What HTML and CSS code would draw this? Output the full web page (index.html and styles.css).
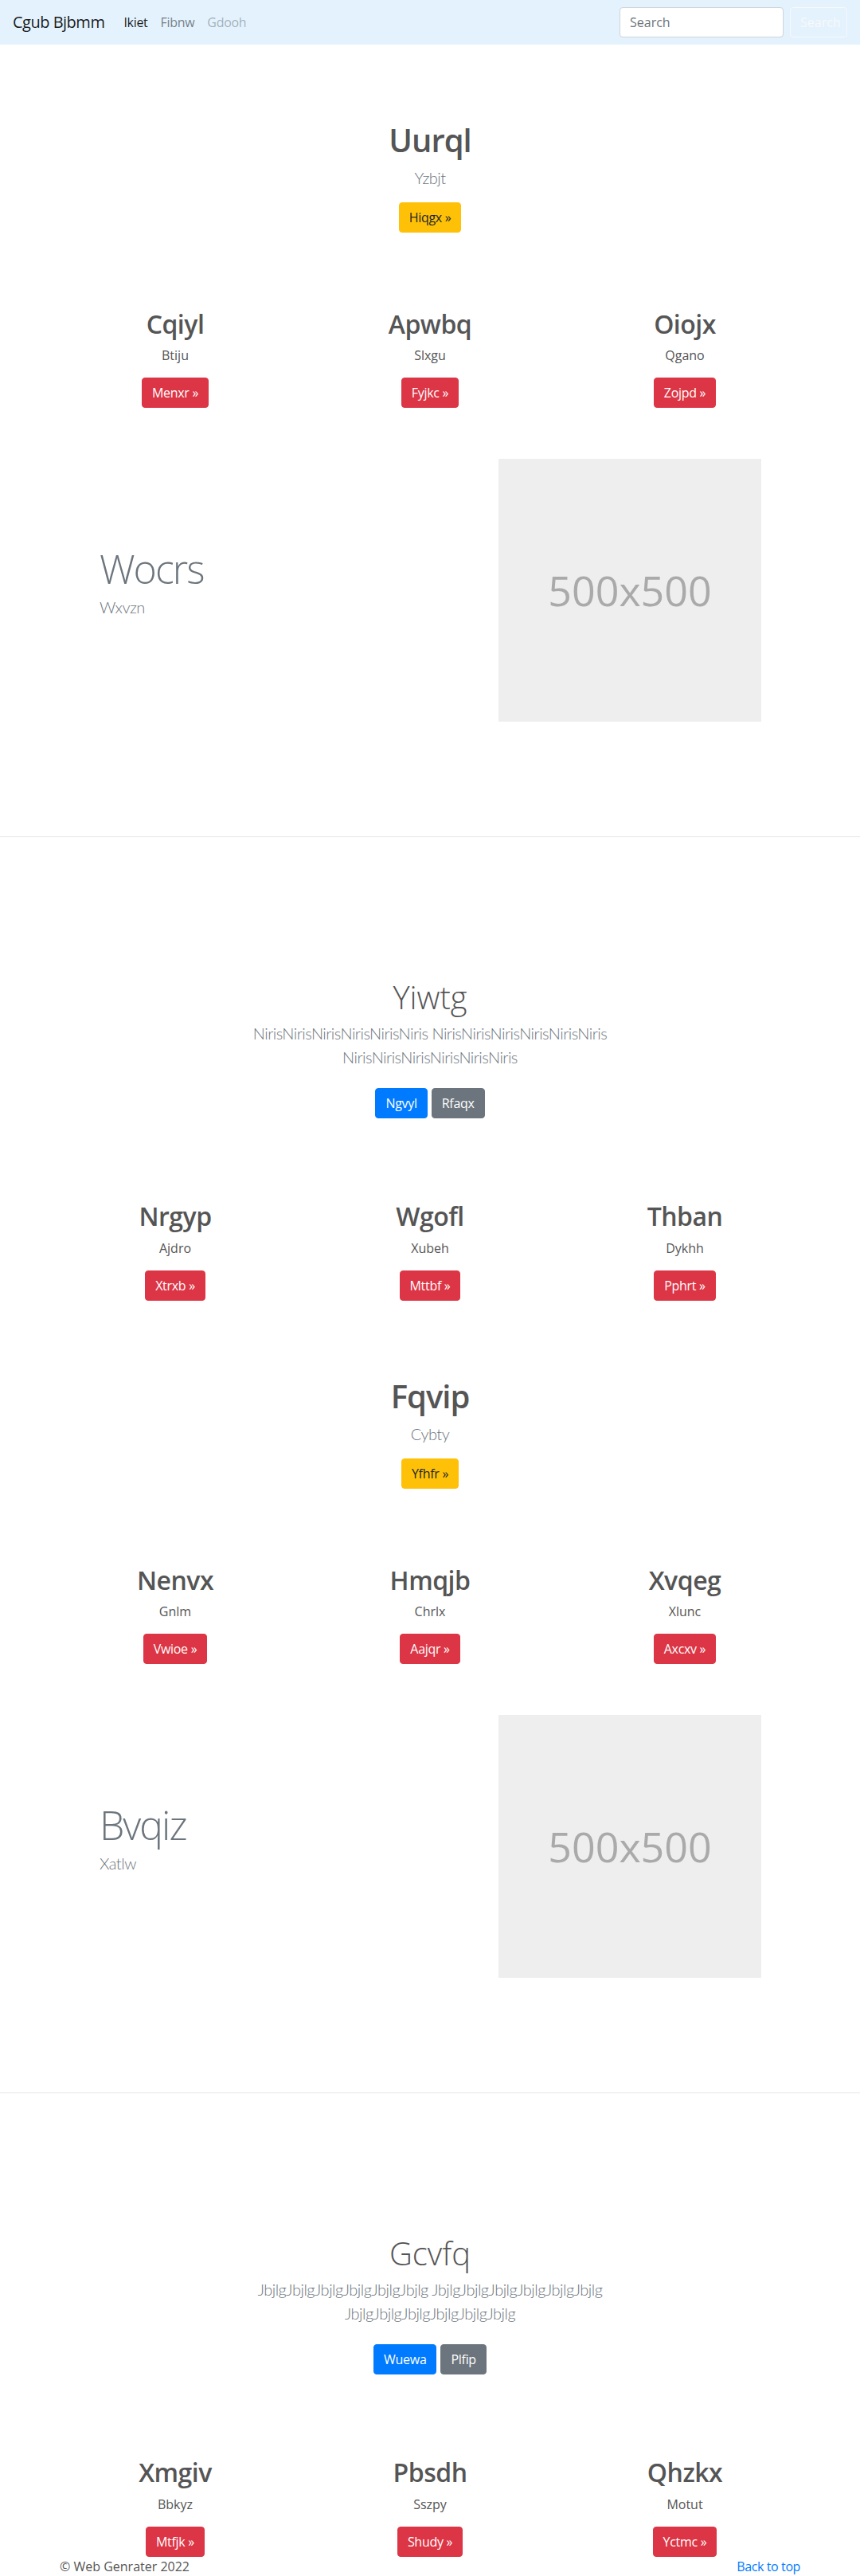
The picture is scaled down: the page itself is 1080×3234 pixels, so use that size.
FILE: index.html
```html
<!DOCTYPE html>
<html lang="en">
<head>
<meta charset="utf-8">
<title>Cgub Bjbmm</title>
<link rel="stylesheet" href="styles.css">
</head>
<body>
<nav class="navbar">
  <a class="brand" href="#">Cgub Bjbmm</a>
  <ul class="nav">
    <li><a class="nav-link active" href="#">Ikiet</a></li>
    <li><a class="nav-link" href="#">Fibnw</a></li>
    <li><a class="nav-link disabled" href="#">Gdooh</a></li>
  </ul>
  <form class="search">
    <input class="search-input" type="text" placeholder="Search">
    <button class="search-btn" type="button">Search</button>
  </form>
</nav>

<main>
  <section class="hero hero-top">
    <h1 class="hero-title">Uurql</h1>
    <p class="lead muted">Yzbjt</p>
    <div class="btn-row"><a class="btn btn-warning" href="#">Hiqgx »</a></div>
  </section>

  <section class="cols">
    <div class="col"><h2 class="col-title">Cqiyl</h2><p class="col-text">Btiju</p><a class="btn btn-danger" href="#">Menxr »</a></div>
    <div class="col"><h2 class="col-title">Apwbq</h2><p class="col-text">Slxgu</p><a class="btn btn-danger" href="#">Fyjkc »</a></div>
    <div class="col"><h2 class="col-title">Oiojx</h2><p class="col-text">Qgano</p><a class="btn btn-danger" href="#">Zojpd »</a></div>
  </section>

  <section class="featurette">
    <div class="feat-text">
      <h2 class="feat-heading">Wocrs</h2>
      <p class="lead muted">Wxvzn</p>
    </div>
    <div class="placeholder">500x500</div>
  </section>

  <hr class="divider">

  <section class="jumbo">
    <h1 class="jumbo-title">Yiwtg</h1>
    <p class="lead muted jumbo-text">NirisNirisNirisNirisNirisNiris NirisNirisNirisNirisNirisNiris NirisNirisNirisNirisNirisNiris</p>
    <div class="btn-row jumbo-btns"><a class="btn btn-primary" href="#">Ngvyl</a><a class="btn btn-secondary" href="#">Rfaqx</a></div>
  </section>

  <section class="cols">
    <div class="col"><h2 class="col-title">Nrgyp</h2><p class="col-text">Ajdro</p><a class="btn btn-danger" href="#">Xtrxb »</a></div>
    <div class="col"><h2 class="col-title">Wgofl</h2><p class="col-text">Xubeh</p><a class="btn btn-danger" href="#">Mttbf »</a></div>
    <div class="col"><h2 class="col-title">Thban</h2><p class="col-text">Dykhh</p><a class="btn btn-danger" href="#">Pphrt »</a></div>
  </section>

  <section class="hero hero-mid">
    <h1 class="hero-title">Fqvip</h1>
    <p class="lead muted">Cybty</p>
    <div class="btn-row"><a class="btn btn-warning" href="#">Yfhfr »</a></div>
  </section>

  <section class="cols">
    <div class="col"><h2 class="col-title">Nenvx</h2><p class="col-text">Gnlm</p><a class="btn btn-danger" href="#">Vwioe »</a></div>
    <div class="col"><h2 class="col-title">Hmqjb</h2><p class="col-text">Chrlx</p><a class="btn btn-danger" href="#">Aajqr »</a></div>
    <div class="col"><h2 class="col-title">Xvqeg</h2><p class="col-text">Xlunc</p><a class="btn btn-danger" href="#">Axcxv »</a></div>
  </section>

  <section class="featurette">
    <div class="feat-text">
      <h2 class="feat-heading">Bvqiz</h2>
      <p class="lead muted">Xatlw</p>
    </div>
    <div class="placeholder">500x500</div>
  </section>

  <hr class="divider">

  <section class="jumbo">
    <h1 class="jumbo-title">Gcvfq</h1>
    <p class="lead muted jumbo-text">JbjlgJbjlgJbjlgJbjlgJbjlgJbjlg JbjlgJbjlgJbjlgJbjlgJbjlgJbjlg JbjlgJbjlgJbjlgJbjlgJbjlgJbjlg</p>
    <div class="btn-row jumbo-btns"><a class="btn btn-primary" href="#">Wuewa</a><a class="btn btn-secondary" href="#">Plfip</a></div>
  </section>

  <section class="cols">
    <div class="col"><h2 class="col-title">Xmgiv</h2><p class="col-text">Bbkyz</p><a class="btn btn-danger" href="#">Mtfjk »</a></div>
    <div class="col"><h2 class="col-title">Pbsdh</h2><p class="col-text">Sszpy</p><a class="btn btn-danger" href="#">Shudy »</a></div>
    <div class="col"><h2 class="col-title">Qhzkx</h2><p class="col-text">Motut</p><a class="btn btn-danger" href="#">Yctmc »</a></div>
  </section>
</main>

<footer class="footer">
  <p class="copy">© Web Genrater 2022</p>
  <a class="top-link" href="#">Back to top</a>
</footer>
</body>
</html>
```

FILE: styles.css
```css
* { box-sizing: border-box; }

html, body { margin: 0; padding: 0; }

body {
  font-family: "Segoe UI", "Open Sans", "Noto Sans", sans-serif;
  font-size: 16px;
  line-height: 1.5;
  color: #555;
  background: #fff;
}

a { text-decoration: none; }

/* ---------- navbar ---------- */
.navbar {
  display: flex;
  align-items: center;
  height: 56px;
  padding: 8px 16px;
  background: #e3f2fd;
}
.brand {
  font-size: 20px;
  line-height: 30px;
  padding: 5px 0;
  margin-right: 16px;
  letter-spacing: -0.5px;
  color: rgba(0, 0, 0, .9);
}
.nav {
  display: flex;
  flex: 1;
  list-style: none;
  margin: 0;
  padding: 0;
}
.nav-link {
  display: block;
  padding: 8px;
  letter-spacing: -0.3px;
  color: rgba(0, 0, 0, .5);
}
.nav-link.active { color: rgba(0, 0, 0, .9); }
.nav-link.disabled { color: rgba(0, 0, 0, .3); }

.search { display: flex; align-items: center; }
.search-input {
  width: 206px;
  height: 38px;
  padding: 6px 12px;
  font: inherit;
  color: #495057;
  background: #fff;
  border: 1px solid #ced4da;
  border-radius: 4px;
  margin-right: 8px;
}
.search-input::placeholder { color: #6c757d; }
.search-btn {
  width: 72px;
  height: 38px;
  padding: 6px 12px;
  font: inherit;
  color: #f8f9fa;
  background: transparent;
  border: 1px solid #f8f9fa;
  border-radius: 4px;
}

/* ---------- common ---------- */
.lead {
  font-family: "Lato", "Open Sans", sans-serif;
  font-size: 20px;
  font-weight: 300;
  line-height: 30px;
  letter-spacing: -0.5px;
  margin: 0 0 16px;
}
.muted { color: #6c757d; }

.btn {
  display: inline-block;
  padding: 6px 12px;
  font-size: 16px;
  line-height: 24px;
  letter-spacing: -0.3px;
  border: 1px solid transparent;
  border-radius: 4px;
  text-align: center;
}
.btn-warning { background: #ffc107; border-color: #ffc107; color: #212529; }
.btn-danger { background: #dc3545; border-color: #dc3545; color: #fff; }
.btn-primary { background: #007bff; border-color: #007bff; color: #fff; }
.btn-secondary { background: #6c757d; border-color: #6c757d; color: #fff; }

.btn-row { display: flex; justify-content: center; }

/* ---------- hero ---------- */
.hero { text-align: center; }
.hero-top { padding-top: 96px; }
.hero-mid { margin-top: 96px; }
.hero-title {
  font-size: 40px;
  font-weight: 600;
  line-height: 48px;
  letter-spacing: -1px;
  margin: 0 0 8px;
}

/* ---------- three columns ---------- */
.cols {
  display: grid;
  grid-template-columns: repeat(3, 1fr);
  width: 960px;
  margin: 96px auto 0;
}
.col {
  display: flex;
  flex-direction: column;
  align-items: center;
  padding: 0 15px;
  text-align: center;
}
.col-title {
  font-size: 32px;
  font-weight: 600;
  line-height: 38.4px;
  letter-spacing: -0.5px;
  margin: 0 0 8px;
}
.col-text { margin: 0 0 16px; }

/* ---------- featurette ---------- */
.featurette {
  display: flex;
  align-items: center;
  width: 960px;
  margin: 64px auto 0;
}
.feat-text { flex: 1; padding-left: 65px; }
.feat-heading {
  font-size: 50px;
  font-weight: 300;
  line-height: 1;
  letter-spacing: -2px;
  color: #6c757d;
  margin: 0 0 8px;
}
.placeholder {
  display: flex;
  align-items: center;
  justify-content: center;
  width: 330px;
  height: 330px;
  margin-right: 64px;
  background: #eee;
  color: #aaa;
  font-size: 52px;
}

.divider {
  margin: 144px 0 0;
  border: 0;
  border-top: 1px solid rgba(0, 0, 0, .1);
}

/* ---------- jumbotron ---------- */
.jumbo { text-align: center; padding-top: 177px; }
.jumbo-title {
  font-size: 40px;
  font-weight: 300;
  line-height: 48px;
  margin: 0 0 6px;
}
.jumbo-text { max-width: 610px; margin-left: auto; margin-right: auto; }
.jumbo-btns { gap: 5px; padding: 8px 0; }

/* ---------- footer ---------- */
.footer {
  display: flex;
  justify-content: space-between;
  width: 960px;
  margin: 0 auto;
  padding: 0 15px;
}
.copy { margin: 0; }
.top-link { color: #007bff; letter-spacing: -0.4px; }
```
